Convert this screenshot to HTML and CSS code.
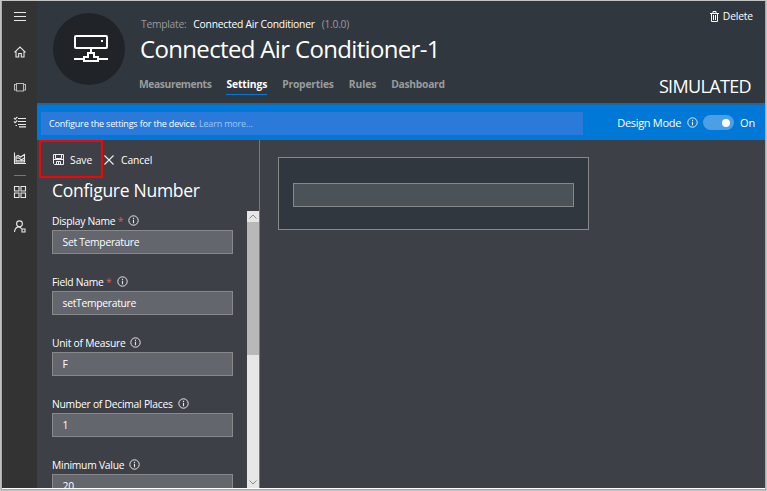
FILE: index.html
```
<!DOCTYPE html>
<html lang="en">
<head>
<meta charset="utf-8">
<title>Connected Air Conditioner-1</title>
<link rel="stylesheet" href="styles.css">
</head>
<body>
<svg width="0" height="0" class="defs">
  <symbol id="info" viewBox="0 0 11 11"><circle cx="5.5" cy="5.5" r="4.7" fill="none" stroke="currentColor"/><path d="M5.5 4.8V8.2M5.5 2.8V3.9" stroke="currentColor" stroke-width="1.1"/></symbol>
</svg>
<div class="window">
  <nav class="rail">
    <svg class="ic" viewBox="0 0 14 14"><path d="M1 3.500H13M1 7.500H13M1 11.500H13"/></svg>
    <svg class="ic" viewBox="0 0 14 14"><path d="M1.500 7.300L7 2L12.500 7.300M3 6.500V12H5.700V8.500H8.300V12H11V6.500"/></svg>
    <svg class="ic dim" viewBox="0 0 14 14"><path d="M3.500 3.500H10.500V11H3.500ZM3.500 4.500H1.500V10H3.500M10.500 4.500H12.500V10H10.500"/></svg>
    <svg class="ic" viewBox="0 0 14 14"><path d="M5 3.500H13M5 6.500H13M5 9.500H13M6 11.900H13M1 3L2.200 4.200L4.300 1.800M1 6.500L2.200 7.700L4.300 5.300M2.500 10.500H4"/></svg>
    <svg class="ic" viewBox="0 0 14 14"><path d="M1.500 1.500V12.500H13"/><path d="M3 11V5.500L5 4.500L7.500 6L11.500 3.500V11Z"/><path d="M3 7L5.500 6.800L8.500 8.800L11.500 7M3 9.800H11.500"/></svg>
    <i class="rule"></i>
    <svg class="ic" viewBox="0 0 14 14"><path d="M1.500 1.500H6V6H1.500ZM8 1.500H12.500V6H8ZM1.500 8H6V12.500H1.500ZM8 8H12.500V12.500H8Z"/></svg>
    <svg class="ic" viewBox="0 0 14 14"><circle cx="6.500" cy="3.800" r="2.900"/><path d="M1.500 12C1.800 9 3.500 6.900 6 6.900C7 6.900 7.600 7.500 8.500 8.800M9 9H12V12H9Z"/></svg>
  </nav>
  <div class="main">
    <header class="head">
      <div class="avatar">
        <svg width="36" height="30" viewBox="0 0 36 30" fill="none" stroke="#fff" stroke-width="2"><rect x="2" y="2" width="32" height="12" rx="1"/><path d="M28 7H30M18 14V19M1 25H11M25 25H35"/><path d="M11 27V23H15V19H21V23H25V27Z"/></svg>
      </div>
      <div class="title-block">
        <div class="template"><span class="muted">Template:</span><span class="tname">Connected Air Conditioner</span><span class="muted">(1.0.0)</span></div>
        <h1>Connected Air Conditioner-1</h1>
        <div class="tabs"><a class="t1">Measurements</a><a class="t2 active">Settings</a><a class="t3">Properties</a><a class="t4">Rules</a><a class="t5">Dashboard</a></div>
      </div>
      <div class="head-right">
        <div class="delete"><svg width="9" height="11" viewBox="0 0 9 11" fill="none" stroke="#fff"><path d="M0 2.500H9M3 2V.5H6V2M1.500 2.500V10.500H7.500V2.500M3.500 4V9M5.500 4V9"/></svg><span>Delete</span></div>
        <div class="simulated">SIMULATED</div>
      </div>
    </header>
    <div class="bar">
      <div class="hint"><span>Configure the settings for the device.</span> <a>Learn more...</a></div>
      <div class="mode"><span class="mode-label">Design Mode</span><svg class="info"><use href="#info"/></svg><span class="toggle"><b></b></span><span>On</span></div>
    </div>
    <div class="work">
      <section class="panel">
        <div class="commands">
          <div class="save"><svg width="11" height="11" viewBox="0 0 11 11" fill="none" stroke="#eee"><path d="M.5.5H10.500V10.500H1.500L.5 9.500ZM2.500 1V4.500H8.500V1M1 5.500H10M3.500 10V7.500H7.500V10M5.500 8V10"/></svg><span>Save</span></div>
          <div class="cancel"><svg width="10" height="10" viewBox="0 0 10 10" stroke="#eee" stroke-width="1.1"><path d="M.5.5L9.500 9.500M9.500.5L.5 9.500"/></svg><span>Cancel</span></div>
        </div>
        <h2>Configure Number</h2>
        <div class="scroll">
          <form class="fields">
            <div class="field"><label>Display Name <em>*</em><svg class="info"><use href="#info"/></svg></label><div class="input tight">Set Temperature</div></div>
            <div class="field"><label>Field Name <em>*</em><svg class="info"><use href="#info"/></svg></label><div class="input tight">setTemperature</div></div>
            <div class="field"><label>Unit of Measure<svg class="info"><use href="#info"/></svg></label><div class="input">F</div></div>
            <div class="field"><label>Number of Decimal Places<svg class="info"><use href="#info"/></svg></label><div class="input">1</div></div>
            <div class="field"><label>Minimum Value<svg class="info"><use href="#info"/></svg></label><div class="input">20</div></div>
          </form>
          <div class="scrollbar">
            <svg viewBox="0 0 12 11"><path d="M2.500 7.500L6 4L9.500 7.500"/></svg>
            <i class="thumb"></i>
            <svg viewBox="0 0 12 11"><path d="M2.500 3.500L6 7L9.500 3.500"/></svg>
          </div>
        </div>
      </section>
      <section class="canvas"><div class="card"><div class="slot"></div></div></section>
    </div>
  </div>
</div>
</body>
</html>
```
FILE: styles.css
```
* { box-sizing: border-box; }
body {
  margin: 0; width: 767px; height: 491px; overflow: hidden;
  background: #c3c3c3; padding: 1px;
  font: 10.3px/14px "Open Sans", "Noto Sans", sans-serif;
  letter-spacing: -0.2px; color: #fff; white-space: nowrap;
}
.defs { position: absolute; }
.window {
  display: flex; width: 765px; height: 489px; overflow: hidden;
  border: solid #7fb5ee; border-width: 0 1px 1px; background: #fff; padding: 0 0 1px;
}
.rail {
  width: 35px; background: #333; flex: none;
  display: flex; flex-direction: column; align-items: center; padding-top: 8px;
}
.ic { width: 14px; height: 14px; fill: none; stroke: #e8e8e8; stroke-width: 1.1; margin-bottom: 21px; flex: none; }
.ic:first-child { margin-bottom: 22px; }
.ic.dim { stroke: #b8b8b8; }
.ic:nth-child(4) { margin-bottom: 22px; }
.ic:nth-child(5) { margin-bottom: 10px; }
.rule { width: 12px; height: 1px; background: #777; margin-bottom: 9px; flex: none; }
.main { flex: 1; min-width: 0; display: flex; flex-direction: column; }
.head { height: 104px; background: #31373e; display: flex; border-bottom: 2px solid #24669c; flex: none; }
.avatar {
  width: 72px; height: 72px; margin: 12px 0 0 16px; border-radius: 50%; padding-left: 4px;
  background: #202328; display: flex; align-items: center; justify-content: center;
}
.title-block { margin-left: 14px; padding-top: 16px; }
.template { display: flex; gap: 7px; padding-left: 2px; letter-spacing: -0.27px; }
.muted { color: #979a9e; }
.tname { letter-spacing: -0.23px; }
h1 { margin: 1px 0 0 1px; font-size: 24px; font-weight: 400; line-height: 34px; letter-spacing: -0.66px; }
.tabs { display: flex; margin-top: 11px; gap: 15px; font-weight: 700; color: #999c9f; }
.tabs a { height: 18px; }
.tabs .active { color: #fff; border-bottom: 1px solid #0078d7; }
.t1 { letter-spacing: -0.4px; }
.t2, .t4 { letter-spacing: -0.1px; }
.t5 { letter-spacing: -0.28px; }
.head-right {
  margin-left: auto; padding: 8px 12px 0 0;
  display: flex; flex-direction: column; align-items: flex-end;
}
.delete { display: flex; align-items: center; gap: 4px; letter-spacing: -0.15px; }
.simulated { font-size: 18px; line-height: 26px; letter-spacing: -0.65px; margin: 50px 2px 0 0; }
.bar { height: 35px; background: #0078d7; display: flex; align-items: center; padding: 0 10px 0 4px; flex: none; }
.hint {
  width: 542px; height: 23px; margin-top: 2px; padding-left: 8px;
  background: #2b7ad9; font-size: 9px; line-height: 24px; letter-spacing: -0.17px;
}
.hint a { color: #9cc8f2; }
.mode { margin-left: auto; display: flex; align-items: center; font-size: 11px; padding-top: 1px; }
.mode-label { letter-spacing: -0.3px; }
.info { width: 11px; height: 11px; flex: none; color: #e6e6e6; }
.mode .info { margin: -2px 5px 0 6px; }
.toggle {
  width: 31px; height: 15px; border-radius: 8px; background: #4c9fe3; margin: -1px 6px 0 0;
  display: flex; align-items: center; justify-content: flex-end; padding-right: 4px;
}
.toggle b { width: 8px; height: 8px; border-radius: 50%; background: #fff; }
.work { flex: 1; min-height: 0; display: flex; background: #3d4047; }
.panel { width: 223px; border-right: 1px solid #777879; display: flex; flex-direction: column; flex: none; }
.commands { display: flex; height: 39px; flex: none; letter-spacing: 0; }
.save {
  width: 64px; height: 38px; margin-left: 2px; border: 2px solid #f00;
  display: flex; align-items: center; gap: 6px; padding: 1px 0 0 12px;
}
.cancel { display: flex; align-items: center; gap: 7px; height: 38px; margin-left: 1px; padding-top: 1px; letter-spacing: -0.1px; }
h2 { margin: 0 0 0 15px; font-size: 17.5px; font-weight: 400; line-height: 22px; letter-spacing: -0.28px; flex: none; }
.scroll { margin-top: 10px; flex: 1; min-height: 0; display: flex; overflow: hidden; }
.fields { width: 210px; padding-left: 15px; }
.field { width: 181px; height: 61px; }
label { display: flex; align-items: center; height: 19px; white-space: pre; letter-spacing: -0.24px; }
label em { color: #d8615f; font-style: normal; }
label .info { margin: -1px 0 0 5px; }
.input { height: 24px; border: 1px solid #86888a; background: #64666d; padding-left: 9.5px; line-height: 23px; }
.tight { letter-spacing: -0.27px; }
.scrollbar { width: 12px; background: #e6e6e6; display: flex; flex-direction: column; }
.scrollbar svg { width: 12px; height: 11px; fill: none; stroke: #888; }
.scrollbar svg:last-child { margin-top: auto; }
.thumb { height: 133px; background: #b8b8b8; }
.canvas { flex: 1; padding: 17px 0 0 18px; }
.card { width: 311px; height: 73px; border: 1px solid #86888a; background: #31373e; padding: 25px 14px 0; }
.slot { height: 24px; border: 1px solid #86888a; background: #4b5258; }
```
